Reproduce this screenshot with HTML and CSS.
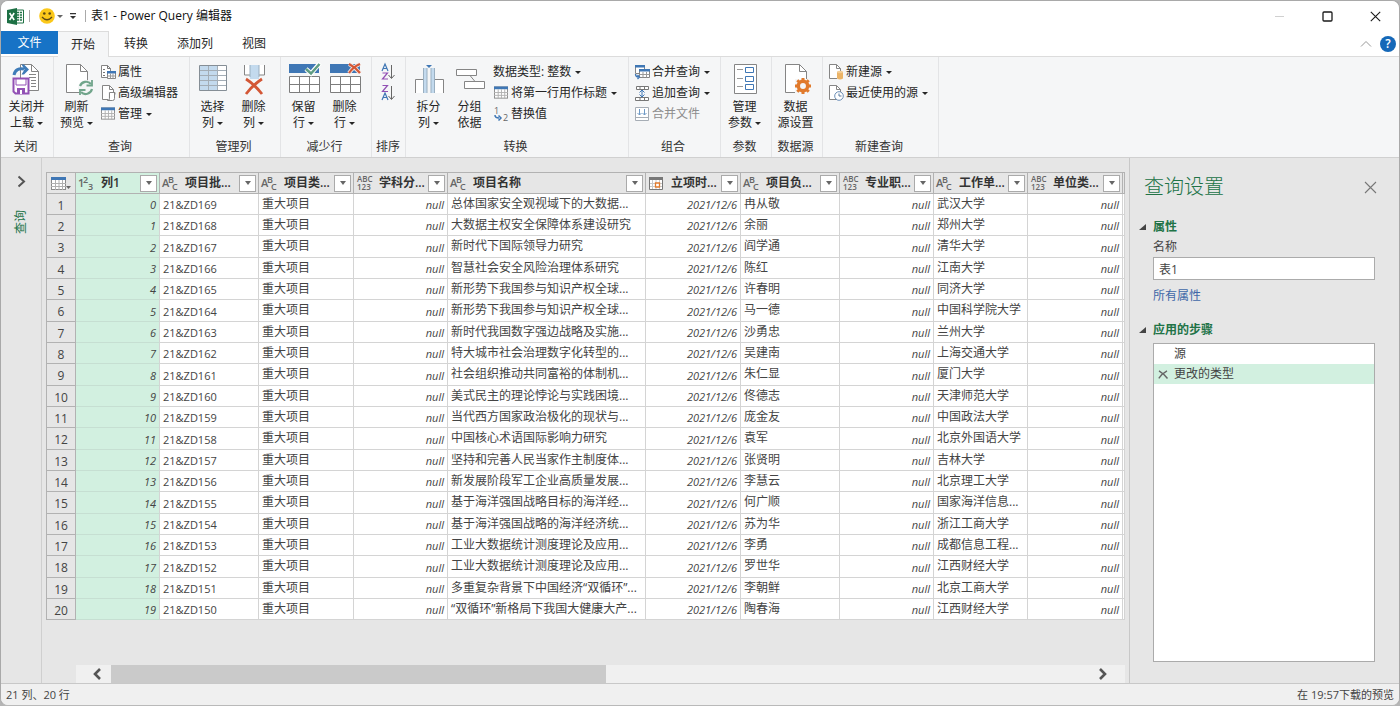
FILE: index.html
```html
<!DOCTYPE html>
<html lang="zh-CN">
<head>
<meta charset="utf-8">
<meta name="viewport" content="width=device-width, initial-scale=1">
<title>表1 - Power Query 编辑器</title>
<link rel="stylesheet" href="styles.css">
</head>
<body>
<svg class="defs" aria-hidden="true">
  <defs>
    <symbol id="t-abc" viewBox="0 0 18 18"><text x="0" y="13" class="ty">A</text><text x="6" y="9" class="ty ty-s">B</text><text x="10" y="16" class="ty ty-s">C</text></symbol>
    <symbol id="t-any" viewBox="0 0 18 18"><text x="1" y="8" class="ty ty-x">ABC</text><text x="1" y="16" class="ty ty-x">123</text></symbol>
    <symbol id="grid" viewBox="0 0 15 14"><rect x=".5" y=".5" width="14" height="12" fill="#fff" stroke="#8a8a8a"/><path d="M0 0h15v3H0z" fill="#3f77b5"/><path d="M4.500 3v10M8 3v10M11.500 3v10M0 6.500h15M0 9.500h15" stroke="#b0b0b0" fill="none"/></symbol>
    <symbol id="page" viewBox="0 0 12 15"><path d="M.5.5h7l4 4v10H.5z" fill="#fff" stroke="#858585"/><path d="M7.500.5v4h4" fill="none" stroke="#858585"/></symbol>
    <symbol id="bigpage" viewBox="0 0 22 30"><path d="M.5.5h14l7 7v21H.5z" fill="#fff" stroke="#858585"/><path d="M14.500.5v7h7" fill="none" stroke="#858585"/></symbol>
  </defs>
</svg>
<div class="window">
  <header class="titlebar">
    <svg class="app" width="17" height="17" viewBox="0 0 17 17"><path d="M9 2h7.500v13H9z" fill="#fff" stroke="#217346"/><path d="M10 4.500h5M10 7h5M10 9.500h5M10 12h5" stroke="#217346" stroke-width="1.300"/><path d="M12.500 3v11" stroke="#fff" stroke-width=".8"/><path d="M0 2l10-2v17L0 15z" fill="#1d7044"/><path d="M2.600 5l4.600 7M7.200 5l-4.600 7" stroke="#fff" stroke-width="1.600"/></svg>
    <span class="bar"></span>
    <button class="quick smile" aria-label="反馈"><svg width="16" height="16" viewBox="0 0 16 16"><circle cx="8" cy="8" r="7.800" fill="#fbc81a"/><circle cx="5.300" cy="5.500" r="1.300" fill="#5b4713"/><circle cx="10.700" cy="5.500" r="1.300" fill="#5b4713"/><path d="M3 9q5 5.500 10 0" fill="none" stroke="#5b4713" stroke-width="1.300"/></svg><i class="caret soft"></i></button>
    <button class="quick" aria-label="自定义快速访问工具栏"><svg width="8" height="7" viewBox="0 0 8 7"><path d="M1 .6h6" stroke="#333" stroke-width="1.200"/><path d="M1 3h6L4 6z" fill="#333"/></svg></button>
    <span class="bar second"></span>
    <h1>表1 - Power Query 编辑器</h1>
    <div class="controls">
      <button aria-label="最小化"><svg width="11" height="11" viewBox="0 0 11 11"><path d="M1 5.500h9" stroke="#d0d0d0"/></svg></button>
      <button aria-label="最大化"><svg width="11" height="11" viewBox="0 0 11 11"><rect x="1" y="1" width="9" height="9" rx="1" fill="none" stroke="#1a1a1a" stroke-width="1.300"/></svg></button>
      <button aria-label="关闭"><svg width="11" height="11" viewBox="0 0 11 11"><path d="M.8.8l9.400 9.400M10.200.8L.8 10.200" stroke="#1a1a1a" stroke-width="1.100"/></svg></button>
    </div>
  </header>
  <nav class="tabs">
    <button class="file">文件</button>
    <button class="active">开始</button>
    <button>转换</button>
    <button>添加列</button>
    <button>视图</button>
    <div class="help">
      <button aria-label="折叠功能区"><svg width="12" height="8" viewBox="0 0 12 8"><path d="M1 6.500L6 1.500l5 5" fill="none" stroke="#999"/></svg></button>
      <button class="q" aria-label="帮助">?</button>
    </div>
  </nav>

  <section class="ribbon">
    <div class="group g-close">
      <div class="tools">
        <button class="big"><svg width="32" height="32" viewBox="0 0 32 32"><path d="M9.500 1.500h11l7 7v19h-18z" fill="#fff" stroke="#858585"/><path d="M20.500 1.500v7h7M18 11.500h7M18 14.500h7M20 17.500h5M20 20.500h5M20 23.500h5" fill="none" stroke="#858585"/><path d="M3 12C4 6.500 8 5 13 6" fill="none" stroke="#3f7cb8" stroke-width="3"/><path d="M10.500 1.500h2.500L18 6.500 13 11.500h-2.500l3-5z" fill="#3f7cb8"/><path d="M2.500 15.500h15v15h-13l-2-2z" fill="#fff" stroke="#9251b5" stroke-width="2"/><path d="M5 16h10v6H5z" fill="#fff" stroke="#9251b5"/><path d="M6 25h8v6H6z" fill="#9251b5"/><path d="M9 27h2v4H9z" fill="#fff"/></svg><span>关闭并<br>上载<i class="caret"></i></span></button>
      </div>
      <h2>关闭</h2>
    </div>
    <div class="group g-query">
      <div class="tools">
        <button class="big"><svg width="32" height="32" viewBox="0 0 32 32"><use href="#bigpage" x="5" y="1" width="22" height="30"/><circle cx="25" cy="25" r="8" fill="#f5f6f7"/><path d="M19 23a6.500 6.500 0 0 1 11-2M31 26a6.500 6.500 0 0 1-11 3" fill="none" stroke="#71a58b" stroke-width="2.200"/><path d="M31 17v5.500h-5.500M19 32v-5h5.500" fill="none" stroke="#71a58b" stroke-width="1.800"/></svg><span>刷新<br>预览<i class="caret"></i></span></button>
        <div class="stack">
          <button><svg width="16" height="16" viewBox="0 0 16 16"><path d="M1.500 1.500h6l3 3v9h-9z" fill="#fff" stroke="#858585"/><path d="M7.500 1.500v3h3M3 5.500h2M3 8.500h2M3 11.500h2" fill="none" stroke="#777"/><path d="M7.500 7.500h8v7h-8z" fill="#fff" stroke="#858585"/><path d="M7 7h9v2.500H7z" fill="#3f77b5"/><path d="M10.500 9.500v5M13 9.500v5M7.500 12h8" stroke="#999"/></svg>属性</button>
          <button><svg width="16" height="16" viewBox="0 0 16 16"><use href="#page" x="2" y="0" width="12" height="15"/><path d="M8 7h8v9H8z" fill="#f5f6f7"/><path d="M9.500 7.500h5v6q0 2-2 2h-5q2 0 2-2zM13 7.500h2v2" fill="#fff" stroke="#858585"/></svg>高级编辑器</button>
          <button><svg width="16" height="16" viewBox="0 0 16 16"><use href="#grid" x="1" y="1" width="14" height="14"/></svg>管理<i class="caret"></i></button>
        </div>
      </div>
      <h2>查询</h2>
    </div>
    <div class="group g-cols">
      <div class="tools">
        <button class="big"><svg width="32" height="32" viewBox="0 0 32 32"><rect x="2.500" y="2.500" width="27" height="25" fill="#fff"/><path d="M3 3h18v24H3z" fill="#c3daee"/><path d="M11.500 2.500v25M20.500 2.500v25M2.500 7.500h27M2.500 12.500h27M2.500 17.500h27M2.500 22.500h27" fill="none" stroke="#a3adb6"/><path d="M2.500 2.500h27v25h-27z" fill="none" stroke="#858e96"/></svg><span>选择<br>列<i class="caret"></i></span></button>
        <button class="big"><svg width="32" height="32" viewBox="0 0 32 32"><path d="M6.500 2v10h20V2" fill="#fff" stroke="#858585"/><path d="M12 2h9v14h-9z" fill="#c3daee"/><path d="M12 2v12M21 2v12" stroke="#9aafc0"/><path d="M8 16q8 5 16 15M24 16Q16 21 8 31" fill="none" stroke="#d35736" stroke-width="2.800"/></svg><span>删除<br>列<i class="caret"></i></span></button>
      </div>
      <h2>管理列</h2>
    </div>
    <div class="group g-rows">
      <div class="tools">
        <button class="big"><svg width="32" height="32" viewBox="0 0 32 32"><path d="M1 1h30v9H1z" fill="#3f77b5"/><path d="M1.500 13.500h30v16h-30zM11.500 13.500v16M21.500 13.500v16M1.500 21.500h30" fill="#fff" stroke="#7d7d7d"/><path d="M18 6l5 4.500L32 0" fill="none" stroke="#fff" stroke-width="4.500"/><path d="M18 6l5 4.500L31.500 1" fill="none" stroke="#5f9d83" stroke-width="2.500"/></svg><span>保留<br>行<i class="caret"></i></span></button>
        <button class="big"><svg width="32" height="32" viewBox="0 0 32 32"><path d="M1 1h30v9H1z" fill="#3f77b5"/><path d="M1.500 13.500h30v16h-30zM11.500 13.500v16M21.500 13.500v16M1.500 21.500h30" fill="#fff" stroke="#7d7d7d"/><path d="M20 1q6 3 11 9M31 1q-7 3-11 9" fill="none" stroke="#f5e5df" stroke-width="4"/><path d="M20 1q6 3 11 9M31 1q-7 3-11 9" fill="none" stroke="#d35736" stroke-width="2.200"/></svg><span>删除<br>行<i class="caret"></i></span></button>
      </div>
      <h2>减少行</h2>
    </div>
    <div class="group g-sort">
      <div class="tools">
        <button aria-label="升序排序"><svg width="16" height="18" viewBox="0 0 16 18"><path d="M2 8l3-7 3 7M3 5.500h4" fill="none" stroke="#3f77b5" stroke-width="1.200"/><path d="M2.500 10h5l-5 6h5.500" fill="none" stroke="#9251b5" stroke-width="1.200"/><path d="M11.500 2v13M8.500 12l3 3.500 3-3.500" fill="none" stroke="#666"/></svg></button>
        <button aria-label="降序排序"><svg width="16" height="18" viewBox="0 0 16 18"><path d="M2.500 1.500h5l-5 6h5.500" fill="none" stroke="#9251b5" stroke-width="1.200"/><path d="M2 16l3-7 3 7M3 13.500h4" fill="none" stroke="#3f77b5" stroke-width="1.200"/><path d="M11.500 2v13M8.500 12l3 3.500 3-3.500" fill="none" stroke="#666"/></svg></button>
      </div>
      <h2>排序</h2>
    </div>
    <div class="group g-transform">
      <div class="tools">
        <button class="big"><svg width="32" height="32" viewBox="0 0 32 32"><path d="M2.500 30V16.500h8V30M21.500 30V16.500h9V30" fill="#fff" stroke="#858585"/><path d="M10 5h4v25h-4zM18 5h4v25h-4z" fill="#c3daee"/><path d="M10.500 30V5M21.500 30V5M14 5v25M18 5v25" stroke="#9aafc0"/><path d="M13 2h6l-3 3z" fill="#3f77b5"/></svg><span>拆分<br>列<i class="caret"></i></span></button>
        <button class="big"><svg width="32" height="32" viewBox="0 0 32 32"><path d="M2.500 6.500h20v6h-20zM10.500 18.500h20v7h-20z" fill="#fff" stroke="#858585"/><path d="M16 12.500l5 6" stroke="#858585"/></svg><span>分组<br>依据</span></button>
        <div class="stack">
          <button>数据类型: 整数<i class="caret"></i></button>
          <button><svg width="16" height="16" viewBox="0 0 16 16"><use href="#grid" x="1" y="1" width="14" height="14"/></svg>将第一行用作标题<i class="caret"></i></button>
          <button><svg width="16" height="16" viewBox="0 0 16 16"><text x="1" y="8" class="ty ty-r">1</text><text x="10" y="15" class="ty ty-r">2</text><path d="M2 9q0 3 4 3M5.500 9.500L8 12l-2.500 2.500" fill="none" stroke="#3f77b5" stroke-width="1.500"/></svg>替换值</button>
        </div>
      </div>
      <h2>转换</h2>
    </div>
    <div class="group g-combine">
      <div class="tools">
        <div class="stack">
          <button><svg width="16" height="16" viewBox="0 0 16 16"><path d="M1.500 1.500h9v8h-9z" fill="#fff" stroke="#858585"/><path d="M1 1h10v2.500H1z" fill="#3f77b5"/><path d="M5.500 5.500h10v8h-10z" fill="#fff" stroke="#858585"/><path d="M5 5h11v2.500H5z" fill="#3f77b5"/><path d="M9 8v5.500M12.500 8v5.500M5.500 10.500h10" stroke="#999"/><path d="M1.500 10q0 3 3 3M3.500 11l2 2-2 2" fill="none" stroke="#3f77b5" stroke-width="1.300"/></svg>合并查询<i class="caret"></i></button>
          <button><svg width="16" height="16" viewBox="0 0 16 16"><path d="M2.500 1.500h12v3h-12zM1.500 12.500h13v3h-13zM6 1.500v3M10.500 1.500v3M6 12.500v3M10.500 12.500v3" fill="#fff" stroke="#777"/><path d="M8 5v7M5.500 7.500L8 5l2.500 2.500M5.500 9.500L8 12l2.500-2.500" fill="none" stroke="#3f77b5"/></svg>追加查询<i class="caret"></i></button>
          <button disabled><svg width="16" height="16" viewBox="0 0 16 16"><path d="M1.500 1.500h13v13h-13zM1.500 11.500h13" fill="#fff" stroke="#a6adb5"/><path d="M5.500 3v6M3.500 7l2 2 2-2M10.500 3v6M8.500 7l2 2 2-2" fill="none" stroke="#6f9ac6"/></svg>合并文件</button>
        </div>
      </div>
      <h2>组合</h2>
    </div>
    <div class="group g-param">
      <div class="tools">
        <button class="big"><svg width="32" height="32" viewBox="0 0 32 32"><path d="M5.500 1.500h22v29h-22z" fill="#fff" stroke="#858585"/><path d="M8 6.500h6M8 15.500h6M8 23.500h6" stroke="#999"/><path d="M16.500 4.500h8v5h-8zM16.500 13.500h8v5h-8zM16.500 21.500h8v5h-8z" fill="#fff" stroke="#3f77b5"/></svg><span>管理<br>参数<i class="caret"></i></span></button>
      </div>
      <h2>参数</h2>
    </div>
    <div class="group g-source">
      <div class="tools">
        <button class="big"><svg width="32" height="32" viewBox="0 0 32 32"><use href="#bigpage" x="5" y="1" width="22" height="30"/><path d="M15 16h16v14H15z" fill="#f5f6f7"/><circle cx="23" cy="23" r="4.700" fill="none" stroke="#e17a2c" stroke-width="3.500"/><path d="M23 15v3M23 28v3M15 23h3M28 23h3M17.300 17.300l2 2M26.700 26.700l2 2M17.300 28.700l2-2M26.700 19.300l2-2" stroke="#e17a2c" stroke-width="3"/></svg><span>数据<br>源设置</span></button>
      </div>
      <h2>数据源</h2>
    </div>
    <div class="group g-new">
      <div class="tools">
        <div class="stack">
          <button><svg width="16" height="16" viewBox="0 0 16 16"><use href="#page" x="1" y="0" width="12" height="15"/><path d="M9 7h7v9H9z" fill="#f5f6f7"/><path d="M9 8v6.500q3 2 6 0V8z" fill="#ecb467"/><ellipse cx="12" cy="8" rx="3" ry="1.300" fill="#f4cd94"/></svg>新建源<i class="caret"></i></button>
          <button><svg width="16" height="16" viewBox="0 0 16 16"><use href="#page" x="1" y="0" width="12" height="15"/><circle cx="11" cy="11" r="4.300" fill="#fff" stroke="#6b8fb8"/><path d="M11 8.500V11h2.500" fill="none" stroke="#55789f"/></svg>最近使用的源<i class="caret"></i></button>
        </div>
      </div>
      <h2>新建查询</h2>
    </div>
  </section>

  <div class="body">
    <aside class="rail">
      <button aria-label="展开查询窗格"><svg width="9" height="13" viewBox="0 0 9 13"><path d="M1.500 1.500l5.500 5-5.500 5" fill="none" stroke="#555" stroke-width="2"/></svg></button>
      <span>查询</span>
    </aside>
    <main>
      <div class="sheet">
        <table>
          <colgroup><col class="c-n"><col class="c-1"><col class="c-2"><col class="c-4"><col class="c-3"><col class="c-5"><col class="c-4"><col class="c-2"><col class="c-3"><col class="c-3"><col class="c-4"><col></colgroup>
          <thead><tr>
            <th><button class="corner" aria-label="表选项"><svg width="20" height="15" viewBox="0 0 20 15"><use href="#grid" x="0" y="1" width="15" height="14"/><path d="M15 10h5l-2.500 3z" fill="#666"/></svg></button></th>
            <th><div class="h"><svg width="18" height="18" viewBox="0 0 18 18"><text x="0" y="13" class="ty">1</text><text x="5" y="9" class="ty ty-s">2</text><text x="10" y="16" class="ty ty-s">3</text></svg><b>列1</b><button aria-label="筛选"></button></div></th>
            <th><div class="h"><svg width="18" height="18"><use href="#t-abc"/></svg><b>项目批...</b><button aria-label="筛选"></button></div></th>
            <th><div class="h"><svg width="18" height="18"><use href="#t-abc"/></svg><b>项目类...</b><button aria-label="筛选"></button></div></th>
            <th><div class="h"><svg width="18" height="18"><use href="#t-any"/></svg><b>学科分...</b><button aria-label="筛选"></button></div></th>
            <th><div class="h"><svg width="18" height="18"><use href="#t-abc"/></svg><b>项目名称</b><button aria-label="筛选"></button></div></th>
            <th><div class="h"><svg width="18" height="16" viewBox="0 0 18 16"><path d="M1.500 2.500h13v12h-13z" fill="#fff" stroke="#777"/><path d="M4.500 5v9M8 5v9M11.500 5v9M2 8.500h12M2 11.500h12" stroke="#c8c8c8"/><path d="M1 2h14v3H1z" fill="#777"/><path d="M7.500 8h4v4h-4z" fill="#fff" stroke="#e17a2c" stroke-width="1.300"/></svg><b>立项时...</b><button aria-label="筛选"></button></div></th>
            <th><div class="h"><svg width="18" height="18"><use href="#t-abc"/></svg><b>项目负...</b><button aria-label="筛选"></button></div></th>
            <th><div class="h"><svg width="18" height="18"><use href="#t-any"/></svg><b>专业职...</b><button aria-label="筛选"></button></div></th>
            <th><div class="h"><svg width="18" height="18"><use href="#t-abc"/></svg><b>工作单...</b><button aria-label="筛选"></button></div></th>
            <th><div class="h"><svg width="18" height="18"><use href="#t-any"/></svg><b>单位类...</b><button aria-label="筛选"></button></div></th>
            <th></th>
          </tr></thead>
          <tbody>
            <tr><th>1</th><td>0</td><td>21&amp;ZD169</td><td>重大项目</td><td>null</td><td>总体国家安全观视域下的大数据...</td><td>2021/12/6</td><td>冉从敬</td><td>null</td><td>武汉大学</td><td>null</td><td></td></tr>
            <tr><th>2</th><td>1</td><td>21&amp;ZD168</td><td>重大项目</td><td>null</td><td>大数据主权安全保障体系建设研究</td><td>2021/12/6</td><td>余丽</td><td>null</td><td>郑州大学</td><td>null</td><td></td></tr>
            <tr><th>3</th><td>2</td><td>21&amp;ZD167</td><td>重大项目</td><td>null</td><td>新时代下国际领导力研究</td><td>2021/12/6</td><td>阎学通</td><td>null</td><td>清华大学</td><td>null</td><td></td></tr>
            <tr><th>4</th><td>3</td><td>21&amp;ZD166</td><td>重大项目</td><td>null</td><td>智慧社会安全风险治理体系研究</td><td>2021/12/6</td><td>陈红</td><td>null</td><td>江南大学</td><td>null</td><td></td></tr>
            <tr><th>5</th><td>4</td><td>21&amp;ZD165</td><td>重大项目</td><td>null</td><td>新形势下我国参与知识产权全球...</td><td>2021/12/6</td><td>许春明</td><td>null</td><td>同济大学</td><td>null</td><td></td></tr>
            <tr><th>6</th><td>5</td><td>21&amp;ZD164</td><td>重大项目</td><td>null</td><td>新形势下我国参与知识产权全球...</td><td>2021/12/6</td><td>马一德</td><td>null</td><td>中国科学院大学</td><td>null</td><td></td></tr>
            <tr><th>7</th><td>6</td><td>21&amp;ZD163</td><td>重大项目</td><td>null</td><td>新时代我国数字强边战略及实施...</td><td>2021/12/6</td><td>沙勇忠</td><td>null</td><td>兰州大学</td><td>null</td><td></td></tr>
            <tr><th>8</th><td>7</td><td>21&amp;ZD162</td><td>重大项目</td><td>null</td><td>特大城市社会治理数字化转型的...</td><td>2021/12/6</td><td>吴建南</td><td>null</td><td>上海交通大学</td><td>null</td><td></td></tr>
            <tr><th>9</th><td>8</td><td>21&amp;ZD161</td><td>重大项目</td><td>null</td><td>社会组织推动共同富裕的体制机...</td><td>2021/12/6</td><td>朱仁显</td><td>null</td><td>厦门大学</td><td>null</td><td></td></tr>
            <tr><th>10</th><td>9</td><td>21&amp;ZD160</td><td>重大项目</td><td>null</td><td>美式民主的理论悖论与实践困境...</td><td>2021/12/6</td><td>佟德志</td><td>null</td><td>天津师范大学</td><td>null</td><td></td></tr>
            <tr><th>11</th><td>10</td><td>21&amp;ZD159</td><td>重大项目</td><td>null</td><td>当代西方国家政治极化的现状与...</td><td>2021/12/6</td><td>庞金友</td><td>null</td><td>中国政法大学</td><td>null</td><td></td></tr>
            <tr><th>12</th><td>11</td><td>21&amp;ZD158</td><td>重大项目</td><td>null</td><td>中国核心术语国际影响力研究</td><td>2021/12/6</td><td>袁军</td><td>null</td><td>北京外国语大学</td><td>null</td><td></td></tr>
            <tr><th>13</th><td>12</td><td>21&amp;ZD157</td><td>重大项目</td><td>null</td><td>坚持和完善人民当家作主制度体...</td><td>2021/12/6</td><td>张贤明</td><td>null</td><td>吉林大学</td><td>null</td><td></td></tr>
            <tr><th>14</th><td>13</td><td>21&amp;ZD156</td><td>重大项目</td><td>null</td><td>新发展阶段军工企业高质量发展...</td><td>2021/12/6</td><td>李慧云</td><td>null</td><td>北京理工大学</td><td>null</td><td></td></tr>
            <tr><th>15</th><td>14</td><td>21&amp;ZD155</td><td>重大项目</td><td>null</td><td>基于海洋强国战略目标的海洋经...</td><td>2021/12/6</td><td>何广顺</td><td>null</td><td>国家海洋信息...</td><td>null</td><td></td></tr>
            <tr><th>16</th><td>15</td><td>21&amp;ZD154</td><td>重大项目</td><td>null</td><td>基于海洋强国战略的海洋经济统...</td><td>2021/12/6</td><td>苏为华</td><td>null</td><td>浙江工商大学</td><td>null</td><td></td></tr>
            <tr><th>17</th><td>16</td><td>21&amp;ZD153</td><td>重大项目</td><td>null</td><td>工业大数据统计测度理论及应用...</td><td>2021/12/6</td><td>李勇</td><td>null</td><td>成都信息工程...</td><td>null</td><td></td></tr>
            <tr><th>18</th><td>17</td><td>21&amp;ZD152</td><td>重大项目</td><td>null</td><td>工业大数据统计测度理论及应用...</td><td>2021/12/6</td><td>罗世华</td><td>null</td><td>江西财经大学</td><td>null</td><td></td></tr>
            <tr><th>19</th><td>18</td><td>21&amp;ZD151</td><td>重大项目</td><td>null</td><td>多重复杂背景下中国经济“双循环”...</td><td>2021/12/6</td><td>李朝鲜</td><td>null</td><td>北京工商大学</td><td>null</td><td></td></tr>
            <tr><th>20</th><td>19</td><td>21&amp;ZD150</td><td>重大项目</td><td>null</td><td>“双循环”新格局下我国大健康大产...</td><td>2021/12/6</td><td>陶春海</td><td>null</td><td>江西财经大学</td><td>null</td><td></td></tr>
          </tbody>
        </table>
      </div>
      <div class="scroll">
        <button aria-label="向左滚动"><svg width="10" height="12" viewBox="0 0 10 12"><path d="M8 1L3 6l5 5" fill="none" stroke="#555" stroke-width="2.600"/></svg></button>
        <div class="track"><div class="thumb"></div></div>
        <button class="next" aria-label="向右滚动"><svg width="10" height="12" viewBox="0 0 10 12"><path d="M2 1l5 5-5 5" fill="none" stroke="#555" stroke-width="2.600"/></svg></button>
      </div>
    </main>
    <aside class="settings">
      <div class="head"><h2>查询设置</h2><button aria-label="关闭窗格"><svg width="13" height="13" viewBox="0 0 13 13"><path d="M1 1l11 11M12 1L1 12" stroke="#777" stroke-width="1.100"/></svg></button></div>
      <h3>属性</h3>
      <label for="qname">名称</label>
      <input id="qname" type="text" value="表1">
      <a href="#all">所有属性</a>
      <h3 class="steps-title">应用的步骤</h3>
      <ul>
        <li>源</li>
        <li class="on"><button aria-label="删除步骤"><svg width="10" height="9" viewBox="0 0 10 9"><path d="M1 .8q5 3 8.500 7.700M9 .8Q4 3.500.8 8.300" fill="none" stroke="#666" stroke-width="1.400"/></svg></button>更改的类型</li>
      </ul>
    </aside>
  </div>
  <footer><span>21 列、20 行</span><span>在 19:57下载的预览</span></footer>
</div>
</body>
</html>
```
FILE: styles.css
```css
* { box-sizing: border-box; }
body {
  margin: 0;
  background: #b5b5b5;
  color: #262626;
  font: 12px/16px "Open Sans", "Noto Sans CJK SC", sans-serif;
}
button {
  margin: 0;
  padding: 0;
  border: 0;
  background: none;
  color: inherit;
  font: inherit;
}
h1, h2, h3, ul { margin: 0; padding: 0; font: inherit; list-style: none; }
svg { display: block; flex: none; overflow: visible; }
symbol { overflow: visible; }
.defs { position: absolute; width: 0; height: 0; overflow: hidden; }
.ty { font: 600 11px "Open Sans", sans-serif; fill: #666; }
.ty-s { font-size: 9px; }
.ty-x { font-size: 8px; }
.ty-r { font-size: 9px; font-weight: 400; }

.window {
  display: flex;
  flex-direction: column;
  height: 100vh;
  overflow: hidden;
  border: 1px solid #a9a9a9;
  border-bottom-color: #b9b9b9;
  border-radius: 8px;
  background: #e6e6e6;
}
.caret {
  display: inline-block;
  margin-left: 3px;
  border: 3px solid transparent;
  border-top-color: currentColor;
  border-bottom: 0;
  vertical-align: middle;
}
.caret.soft { color: #666; }

.titlebar { display: flex; align-items: center; height: 30px; padding-left: 6px; background: #fff; flex: none; }
.bar { width: 1px; height: 12px; margin-left: 5px; background: #aaa; }
.quick { display: flex; align-items: center; margin-left: 6px; }
.smile { margin-left: 9px; }
.smile .caret { margin-left: 2px; }
.bar.second { margin-left: 8px; }
h1 { margin-left: 5px; color: #111; }
.controls { display: flex; margin-left: auto; }
.controls button { display: grid; place-items: center; width: 48px; height: 30px; }

.tabs { display: flex; gap: 1px; height: 26px; background: #fff; border-bottom: 1px solid #dcdcdc; flex: none; }
.tabs > button { padding: 0 14px; }
.tabs .file { width: 57px; margin: 0 -1px 2px 0; padding-top: 1px; background: #1773c6; color: #fff; }
.tabs .active { margin-bottom: -1px; padding: 0 13px; background: #f5f6f7; border: solid #dcdcdc; border-width: 1px 1px 0 0; }
.help { display: flex; align-items: center; gap: 8px; margin-left: auto; padding-right: 3px; }
.help .q { width: 16px; height: 16px; border-radius: 50%; background: #1568b8; color: #fff; font-weight: 600; }

.ribbon { display: flex; height: 101px; background: #f5f6f7; border-bottom: 1px solid #d0d0d0; flex: none; }
.group { display: flex; flex-direction: column; justify-content: space-between; flex: none; padding: 6px 3px 2px 0; border-right: 1px solid #e3e4e6; }
.group h2 { text-align: center; color: #333; }
.tools { display: flex; padding-left: 2px; }
.big { display: flex; flex-direction: column; align-items: center; gap: 4px; width: 41px; white-space: nowrap; }
.stack { display: flex; flex-direction: column; align-items: flex-start; margin-left: 3px; }
.stack button { display: flex; align-items: center; gap: 2px; height: 21px; padding-bottom: 3px; white-space: nowrap; }
.stack .caret { margin-left: 2px; }
.stack button:disabled { color: #8d8d8d; }
.g-close { width: 53px; }
.g-close .tools { padding-left: 5px; }
.g-query { width: 136px; }
.g-cols, .g-rows { width: 91px; }
.g-sort { width: 34px; padding-right: 1px; }
.g-sort .tools { flex-direction: column; align-items: center; gap: 3px; padding: 0; }
.g-transform { width: 223px; }
.g-combine { width: 92px; }
.g-param, .g-source { width: 51px; }
.g-param .tools, .g-source .tools { justify-content: center; padding: 0; }
.g-new { width: 116px; }

.body { display: flex; flex: 1; min-height: 0; }
.rail { display: flex; flex-direction: column; align-items: center; gap: 22px; width: 41px; padding-top: 17px; border-right: 1px solid #cfcfcf; flex: none; }
.rail span { color: #217346; writing-mode: vertical-rl; text-orientation: sideways; transform: rotate(180deg); }
main { display: flex; flex-direction: column; flex: 1; min-width: 0; padding: 14px 4px 0; }
.sheet { flex: 1; min-height: 0; overflow: hidden; }
table { width: 100%; table-layout: fixed; border-collapse: separate; border-spacing: 0; color: #444; }
.c-n { width: 30px; }
.c-1 { width: 84px; }
.c-2 { width: 99px; }
.c-3 { width: 94px; }
.c-4 { width: 95px; }
.c-5 { width: 198px; }
th, td { padding: 0; border: solid #d4d4d4; border-width: 0 1px 1px 0; overflow: hidden; white-space: nowrap; }
thead th { height: 22px; border: solid #b2b2b2; border-width: 1px 1px 1px 0; background: #e6e6e6; }
tr > th:first-child { border-left: 1px solid #b2b2b2; }
.corner { display: flex; margin-left: 4px; }
.h { display: flex; align-items: center; height: 20px; padding: 0 2px; }
.h b { flex: 1; margin-left: 5px; text-align: left; color: #333; font-weight: 600; }
.h button { width: 17px; height: 17px; border: 1px solid #aaa; background: #fff; flex: none; }
.h button::after { content: ""; display: block; width: 0; margin: 0 auto; border: 3px solid transparent; border-top: 4px solid #666; border-bottom: 0; }
tbody tr { height: 21px; }
tbody tr:nth-child(3n) { height: 22px; }
tbody th { padding-top: 3px; border-color: #b2b2b2; background: #e6e6e6; font-weight: 400; }
td { padding: 0 3px 1px; background: #fff; }
td:nth-child(2), td:nth-child(5), td:nth-child(7), td:nth-child(9), td:nth-child(11) { text-align: right; font-size: 11px; font-style: italic; padding: 2px 3px 0; }
td:nth-child(3) { font-size: 11px; padding: 2px 3px 0; }
th:nth-child(2), td:nth-child(2) { background: #d2f0e0; }
td:nth-child(2) { border-bottom-color: #c6dfd2; }
td:last-child { padding: 0; }

.scroll { display: flex; height: 18px; margin: 0 0 0 30px; background: #f0f0f0; flex: none; }
.scroll button { display: grid; place-items: center; width: 35px; padding-left: 7px; }
.scroll .next { width: 44px; padding: 0; }
.track { flex: 1; }
.thumb { width: 51%; height: 100%; background: #cacaca; }

.settings { display: flex; flex-direction: column; width: 270px; padding: 14px 24px 21px 23px; border-left: 1px solid #c8c8c8; flex: none; }
.head { display: flex; justify-content: space-between; align-items: center; height: 30px; margin: 0 -2px 17px -9px; }
.head h2 { color: #217346; font-size: 20px; line-height: 28px; font-weight: 300; }
h3 { display: flex; align-items: center; gap: 7px; margin: 0 0 4px -14px; color: #217346; font-weight: 700; }
h3::before { content: ""; border: solid transparent; border-width: 0 0 6px 7px; border-bottom-color: #444; }
.settings label { color: #444; margin-bottom: 2px; }
.settings input { width: 100%; height: 23px; padding: 0 5px; border: 1px solid #ababab; background: #fff; color: #444; font: inherit; }
.settings a { margin: 8px 0 18px; color: #3f68a8; text-decoration: none; }
.steps-title { margin-bottom: 5px; }
.settings ul { flex: 1; border: 1px solid #ababab; background: #fff; color: #444; }
.settings li { display: flex; align-items: center; height: 20px; padding-left: 20px; }
.settings li.on { padding-left: 4px; gap: 6px; background: #d2f0e0; }

footer { display: flex; justify-content: space-between; align-items: center; height: 22px; padding: 0 5px; background: #f0f0f0; border-top: 1px solid #c8c8c8; color: #444; font-size: 11px; flex: none; }
```
